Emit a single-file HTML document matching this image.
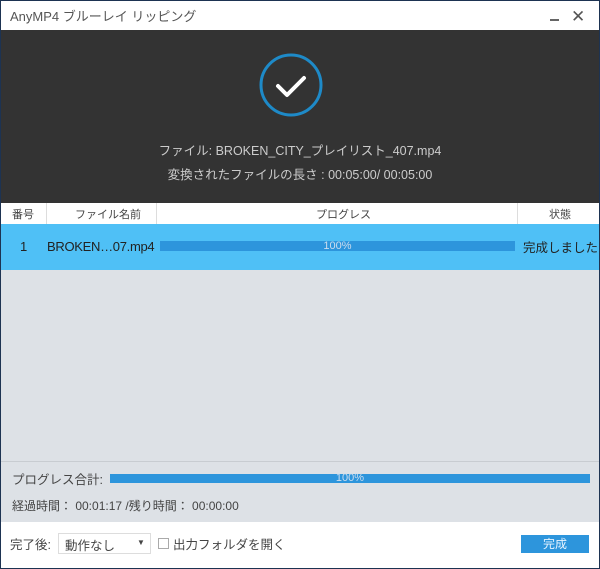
<!DOCTYPE html>
<html><head><meta charset="utf-8"><style>
*{margin:0;padding:0;box-sizing:border-box}
body{width:600px;height:569px;overflow:hidden;font-family:"Liberation Sans","Noto Sans CJK JP",sans-serif;background:#dde1e6;position:relative;font-size:12px}
.a{position:absolute;white-space:nowrap}
</style></head><body>
<div class="a" style="left:0;top:0;width:600px;height:569px;border:1px solid #1d3352"></div>
<div class="a" style="left:1px;top:1px;width:598px;height:29px;background:#fff"></div>
<div class="a" style="left:10px;top:6px;color:#555;font-size:13px">AnyMP4 ブルーレイ リッピング</div>
<div class="a" style="left:550px;top:19px;width:9px;height:2px;background:#666"></div>
<div class="a" style="left:571px;top:7px;font-size:17px;color:#555;line-height:20px">✕</div>
<div class="a" style="left:1px;top:30px;width:598px;height:173px;background:#333"></div>
<svg class="a" style="left:258px;top:52px" width="66" height="66"><circle cx="33" cy="33" r="30" fill="none" stroke="#1e8ac8" stroke-width="3"/><path d="M20 34 L29 43 L46 26" fill="none" stroke="#fff" stroke-width="4" stroke-linecap="round" stroke-linejoin="round"/></svg>
<div class="a" style="left:0;top:140px;width:600px;text-align:center;color:#ccc;font-size:12.5px">ファイル: BROKEN_CITY_プレイリスト_407.mp4</div>
<div class="a" style="left:0;top:164px;width:600px;text-align:center;color:#ccc;font-size:12.5px">変換されたファイルの長さ : 00:05:00/ 00:05:00</div>
<div class="a" style="left:1px;top:203px;width:598px;height:21px;background:#fff;color:#444;font-size:11px">
<span class="a" style="left:11px;top:3px">番号</span><span class="a" style="left:45px;top:0;width:1px;height:21px;background:#ddd"></span>
<span class="a" style="left:74px;top:3px">ファイル名前</span><span class="a" style="left:155px;top:0;width:1px;height:21px;background:#ddd"></span>
<span class="a" style="left:315px;top:3px">プログレス</span><span class="a" style="left:516px;top:0;width:1px;height:21px;background:#ddd"></span>
<span class="a" style="left:548px;top:3px">状態</span></div>
<div class="a" style="left:1px;top:224px;width:598px;height:46px;background:#4fc0f6"></div>
<div class="a" style="left:20px;top:239px;color:#222;font-size:13px">1</div>
<div class="a" style="left:47px;top:239px;color:#222;font-size:13px;letter-spacing:-0.3px">BROKEN…07.mp4</div>
<div class="a" style="left:160px;top:241px;width:355px;height:10px;background:#2d95dc"></div>
<div class="a" style="left:160px;top:239px;width:355px;text-align:center;color:#cde;font-size:11px;line-height:14px">100%</div>
<div class="a" style="left:523px;top:237px;color:#222;font-size:12.5px">完成しました</div>
<div class="a" style="left:1px;top:461px;width:598px;height:1px;background:#c8ccd1"></div>
<div class="a" style="left:12px;top:469px;color:#444;font-size:12.5px">プログレス合計:</div>
<div class="a" style="left:110px;top:474px;width:480px;height:9px;background:#2d95dc"></div>
<div class="a" style="left:110px;top:471px;width:480px;text-align:center;color:#cde;font-size:11px;line-height:14px">100%</div>
<div class="a" style="left:12px;top:497px;color:#444;font-size:12px">経過時間： 00:01:17 /残り時間： 00:00:00</div>
<div class="a" style="left:1px;top:522px;width:598px;height:46px;background:#fff"></div>
<div class="a" style="left:10px;top:534px;color:#444;font-size:12.5px">完了後:</div>
<div class="a" style="left:58px;top:533px;width:93px;height:21px;border:1px solid #ddd;background:#fff"><span class="a" style="left:6px;top:1px;color:#444;font-size:12.5px">動作なし</span><span class="a" style="left:78px;top:4px;font-size:8px;color:#444">▼</span></div>
<div class="a" style="left:158px;top:538px;width:11px;height:11px;border:1px solid #aaa"></div>
<div class="a" style="left:173px;top:534px;color:#444;font-size:12.5px">出力フォルダを開く</div>
<div class="a" style="left:521px;top:535px;width:68px;height:18px;background:#2d95dc;color:#e8f4ff;text-align:center;font-size:12px;line-height:18px">完成</div>
</body></html>
